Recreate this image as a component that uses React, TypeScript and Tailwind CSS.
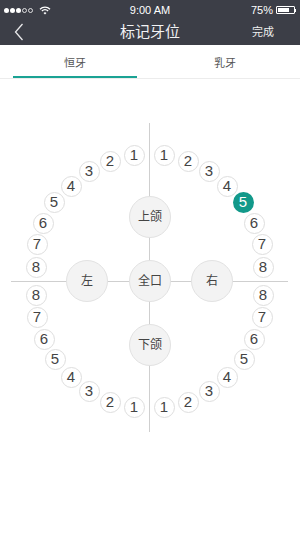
import { ReactNode } from "react";

type Tooth = { n: number; x: number; y: number; active?: boolean };

// page coordinates of tooth centers
const TEETH: Tooth[] = [
  { n: 1, x: 134, y: 155 },
  { n: 2, x: 110, y: 161 },
  { n: 3, x: 89, y: 171 },
  { n: 4, x: 71, y: 186 },
  { n: 5, x: 54, y: 202 },
  { n: 6, x: 43, y: 223 },
  { n: 7, x: 37, y: 244 },
  { n: 8, x: 36, y: 267 },
  { n: 1, x: 164, y: 155 },
  { n: 2, x: 188, y: 161 },
  { n: 3, x: 209, y: 171 },
  { n: 4, x: 227, y: 186 },
  { n: 5, x: 243, y: 202, active: true },
  { n: 6, x: 254, y: 223 },
  { n: 7, x: 262, y: 244 },
  { n: 8, x: 263, y: 267 },
  { n: 8, x: 36, y: 295 },
  { n: 7, x: 37, y: 317 },
  { n: 6, x: 44, y: 339 },
  { n: 5, x: 55, y: 359 },
  { n: 4, x: 71, y: 377 },
  { n: 3, x: 89, y: 391 },
  { n: 2, x: 110, y: 402 },
  { n: 1, x: 134, y: 407 },
  { n: 8, x: 263, y: 295 },
  { n: 7, x: 262, y: 317 },
  { n: 6, x: 254, y: 339 },
  { n: 5, x: 244, y: 359 },
  { n: 4, x: 227, y: 377 },
  { n: 3, x: 209, y: 391 },
  { n: 2, x: 188, y: 402 },
  { n: 1, x: 164, y: 407 },
];

const TOP = 79;

const Big = (props: { x: number; y: number; children: ReactNode }) => (
  <div
    className="absolute w-[42px] h-[42px] -ml-[21px] -mt-[21px] rounded-full bg-[#f3f3f3] border border-[#e2e2e2] flex items-center justify-center text-[12px] text-[#444]"
    style={{ left: props.x, top: props.y - TOP }}
  >
    {props.children}
  </div>
);

const StatusBar = () => (
  <div className="h-[20px] flex items-center px-[4px] text-[11px] text-white relative">
    <div className="flex items-center gap-[1px]">
      {[0, 1, 2].map((i) => (
        <span key={i} className="w-[5px] h-[5px] rounded-full bg-white" />
      ))}
      {[0, 1].map((i) => (
        <span key={"o" + i} className="w-[5px] h-[5px] rounded-full border border-white/80" />
      ))}
    </div>
    <svg width="12" height="9" viewBox="0 0 12 9" className="ml-[6px]">
      <path d="M1 3.2a7 7 0 0 1 10 0" stroke="white" strokeWidth="1.3" fill="none" />
      <path d="M2.9 5a4.3 4.3 0 0 1 6.2 0" stroke="white" strokeWidth="1.3" fill="none" />
      <path d="M6 8.6 4.5 6.9a2.1 2.1 0 0 1 3 0z" fill="white" />
    </svg>
    <div className="absolute left-0 right-0 text-center pointer-events-none">9:00 AM</div>
    <div className="ml-auto flex items-center gap-[3px]">
      <span>75%</span>
      <div className="flex items-center">
        <div className="w-[19px] h-[8px] border border-white rounded-[1px] p-[1px]">
          <div className="w-[75%] h-full bg-white" />
        </div>
        <div className="w-[1px] h-[3px] bg-white" />
      </div>
    </div>
  </div>
);

export default function App() {
  return (
    <div
      className="w-[300px] h-[533px] bg-white overflow-hidden"
      style={{ fontFamily: '"Liberation Sans", "Noto Sans CJK SC", sans-serif' }}
    >
      <div className="bg-[#3c3e47]">
        <StatusBar />
        <div className="h-[25px] flex items-center px-[14px] relative">
          <svg width="10" height="18" viewBox="0 0 10 18" className="-mt-[1px]">
            <path d="M8.5 1 1.5 9l7 8" stroke="#e8e8ea" strokeWidth="1.3" fill="none" />
          </svg>
          <div className="absolute left-0 right-0 text-center text-[15px] text-[#f2f2f4] -mt-[1px] pointer-events-none">
            标记牙位
          </div>
          <div className="ml-auto text-[11px] text-[#eeeeee] mr-[12px]">完成</div>
        </div>
      </div>

      <div className="h-[34px] flex border-b border-[#ececec]">
        <div className="flex-1 flex flex-col items-center">
          <div className="flex-1 flex items-center pt-[6px] text-[11px] text-[#555]">恒牙</div>
          <div className="h-[2px] w-[124px] bg-[#1aa394]" />
        </div>
        <div className="flex-1 flex flex-col items-center">
          <div className="flex-1 flex items-center pt-[6px] text-[11px] text-[#555]">乳牙</div>
          <div className="h-[2px]" />
        </div>
      </div>

      <div className="relative h-[420px]">
        <div className="absolute left-[149px] top-[44px] w-[1px] h-[309px] bg-[#cfcfcf]" />
        <div className="absolute left-[11px] top-[202px] h-[1px] w-[277px] bg-[#cfcfcf]" />

        <Big x={150} y={217}>上颌</Big>
        <Big x={87} y={281}>左</Big>
        <Big x={150} y={281}>全口</Big>
        <Big x={212} y={281}>右</Big>
        <Big x={150} y={345}>下颌</Big>

        {TEETH.map((t, i) => (
          <div
            key={i}
            className={
              t.active
                ? "absolute w-[21px] h-[21px] -ml-[10.5px] -mt-[10.5px] rounded-full bg-[#12998a] flex items-center justify-center text-[15px] text-white"
                : "absolute w-[21px] h-[21px] -ml-[10.5px] -mt-[10.5px] rounded-full bg-white border border-[#dedede] flex items-center justify-center text-[15px] text-[#444]"
            }
            style={{ left: t.x, top: t.y - TOP }}
          >
            {t.n}
          </div>
        ))}
      </div>
    </div>
  );
}
